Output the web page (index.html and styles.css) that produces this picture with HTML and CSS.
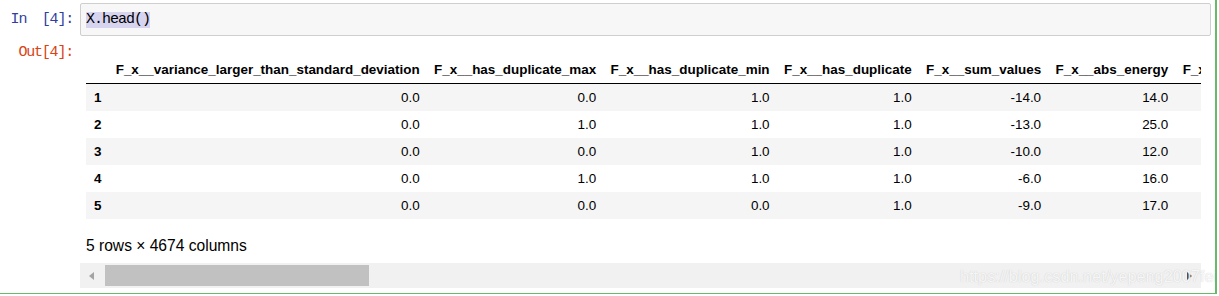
FILE: index.html
```html
<!DOCTYPE html>
<html lang="en">
  <head>
    <meta charset="UTF-8" />
    <title>Notebook cell</title>
    <link rel="stylesheet" href="styles.css">
  </head>
  <body>
    <div class="cell">
      <div class="input-row">
        <div class="prompt in-prompt">In  [4]:</div>
        <div class="input-box">
          <span class="code selected">X.head()</span>
        </div>
      </div>
      <div class="output-row">
        <div class="prompt out-prompt">Out[4]:</div>
        <div class="output-area">
          <div class="output-scroll">
            <table class="dataframe">
              <thead>
                <tr>
                  <th></th>
                  <th>F_x__variance_larger_than_standard_deviation</th>
                  <th>F_x__has_duplicate_max</th>
                  <th>F_x__has_duplicate_min</th>
                  <th>F_x__has_duplicate</th>
                  <th>F_x__sum_values</th>
                  <th>F_x__abs_energy</th>
                  <th>F_x__mean_abs_change</th>
                </tr>
              </thead>
              <tbody>
                <tr>
                  <th>1</th>
                  <td>0.0</td><td>0.0</td><td>1.0</td><td>1.0</td><td>-14.0</td><td>14.0</td><td>1.0</td>
                </tr>
                <tr>
                  <th>2</th>
                  <td>0.0</td><td>1.0</td><td>1.0</td><td>1.0</td><td>-13.0</td><td>25.0</td><td>1.0</td>
                </tr>
                <tr>
                  <th>3</th>
                  <td>0.0</td><td>0.0</td><td>1.0</td><td>1.0</td><td>-10.0</td><td>12.0</td><td>1.0</td>
                </tr>
                <tr>
                  <th>4</th>
                  <td>0.0</td><td>1.0</td><td>1.0</td><td>1.0</td><td>-6.0</td><td>16.0</td><td>1.0</td>
                </tr>
                <tr>
                  <th>5</th>
                  <td>0.0</td><td>0.0</td><td>0.0</td><td>1.0</td><td>-9.0</td><td>17.0</td><td>1.0</td>
                </tr>
              </tbody>
            </table>
            <p class="shape">5 rows × 4674 columns</p>
          </div>
          <div class="scrollbar">
            <span class="arrow arrow-left"></span>
            <div class="thumb"></div>
            <span class="arrow arrow-right"></span>
          </div>
        </div>
      </div>
      <div class="watermark">https://blog.csdn.net/yepeng2007fei</div>
    </div>
  </body>
</html>
```

FILE: styles.css
```css
* {
  box-sizing: border-box;
}
body {
  margin: 0;
  background: #ffffff;
  font-family: "Liberation Sans", Arial, sans-serif;
  color: #000000;
}

.cell {
  position: relative;
  width: 1217px;
  height: 294px;
  padding-top: 3px;
  border-right: 2px solid #66bb6a;
  border-bottom: 1px solid #66bb6a;
  overflow: hidden;
}

.input-row,
.output-row {
  display: flex;
}

.prompt {
  width: 80px;
  flex: none;
  padding-right: 7px;
  text-align: right;
  white-space: pre;
  font-family: "Liberation Mono", "Courier New", monospace;
  font-size: 15px;
  letter-spacing: -1.2px;
  line-height: 16px;
}
.in-prompt {
  color: #303f9f;
  padding-top: 9px;
}
.out-prompt {
  color: #d84315;
  padding-top: 9px;
}

.input-box {
  width: 1131px;
  height: 33px;
  padding-left: 5px;
  display: flex;
  align-items: center;
  background-color: #f7f7f7;
  border: 1px solid #cfcfcf;
  border-radius: 2px;
}
.code {
  font-family: "Liberation Mono", "Courier New", monospace;
  font-size: 15px;
  letter-spacing: -1px;
  line-height: 16px;
}
.selected {
  background-color: #d7d4f0;
}

.output-area {
  width: 1121px;
  padding-top: 20px;
}
.output-scroll {
  padding-left: 6px;
  overflow: hidden;
}

.dataframe {
  border-collapse: separate;
  border-spacing: 0;
  font-size: 13.45px;
  white-space: nowrap;
}
.dataframe th,
.dataframe td {
  padding: 0 7.2px;
  line-height: 27px;
  text-align: right;
}
.dataframe thead th {
  font-weight: bold;
  border-bottom: 1px solid #000000;
}
.dataframe tbody th {
  font-weight: bold;
  text-align: left;
  padding-left: 8px;
  padding-right: 7px;
}
.dataframe tbody tr:nth-child(odd) {
  background-color: #f5f5f5;
}

.shape {
  margin: 18px 0 8px;
  font-size: 15.6px;
  line-height: 18px;
}

.scrollbar {
  height: 25px;
  background-color: #f1f1f1;
  display: flex;
  align-items: center;
}
.thumb {
  width: 264px;
  height: 21px;
  margin-left: 11px;
  background-color: #c1c1c1;
}
.arrow {
  width: 0;
  height: 0;
  border-top: 4px solid transparent;
  border-bottom: 4px solid transparent;
}
.arrow-left {
  margin-left: 9px;
  border-right: 5px solid #a3a3a3;
}
.arrow-right {
  margin-left: auto;
  margin-right: 9px;
  border-left: 5px solid #505050;
}

.watermark {
  position: absolute;
  left: 960px;
  top: 266px;
  font-size: 16.3px;
  line-height: 20px;
  color: rgba(255, 255, 255, 0.85);
  text-shadow: 0 0 1px rgba(120, 120, 120, 0.4);
  white-space: nowrap;
}
```
